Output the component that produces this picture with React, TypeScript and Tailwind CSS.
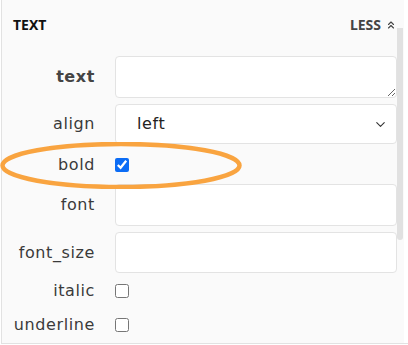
import { ChevronsUp, ChevronDown } from "lucide-react";

function Label({ children, bold }: { children: string; bold?: boolean }) {
  return (
    <div
      className={`w-[93px] shrink-0 text-right font-['DejaVu_Sans',sans-serif] text-[16px] tracking-[0.6px] ${
        bold ? "font-bold text-[#444]" : "text-[#3a3a3a]"
      }`}
    >
      {children}
    </div>
  );
}

export default function App() {
  return (
    <main className="relative h-[345px] w-[408px] overflow-hidden bg-white font-['Noto_Sans',sans-serif]">
      <div className="ml-px flex h-[344px] border-b border-l border-[#e2e2e2] bg-[#fafafa]">
        <div className="flex flex-1 flex-col">
          {/* header */}
          <div className="flex h-[49px] items-center justify-between pl-[11px] pr-[0px]">
            <span className="text-[14px] font-bold text-[#111]">TEXT</span>
            <span className="flex items-center gap-[4px] text-[14px] font-bold text-[#444]">
              LESS
              <ChevronsUp size={12} strokeWidth={2.25} />
            </span>
          </div>

          <div className="flex flex-col">
            {/* text */}
            <div className="mt-[7px] flex h-[42px] items-center gap-5">
              <Label bold>text</Label>
              <textarea className="block h-[42px] flex-1 resize-y rounded border border-[#e3e3e3] bg-white outline-none" />
            </div>

            {/* align */}
            <div className="mt-[6px] flex h-[40px] items-center gap-5">
              <Label>align</Label>
              <div className="flex h-[40px] flex-1 items-center justify-between rounded border border-[#e3e3e3] bg-white pl-[21px] pr-[8px] font-['DejaVu_Sans',sans-serif] text-[16px] tracking-[0.6px] text-[#222]">
                left
                <ChevronDown size={15} strokeWidth={1.75} className="text-[#333]" />
              </div>
            </div>

            {/* bold */}
            <div className="flex h-[40px] items-center gap-5 pt-[2px]">
              <Label>bold</Label>
              <input
                type="checkbox"
                defaultChecked
                className="m-0 h-[14px] w-[14px] accent-[#0b6cf5]"
              />
            </div>

            {/* font */}
            <div className="flex h-[42px] items-center gap-5">
              <Label>font</Label>
              <input className="h-[42px] flex-1 rounded border border-[#e3e3e3] bg-white outline-none" />
            </div>

            {/* font_size */}
            <div className="mt-[6px] flex h-[41px] items-center gap-5">
              <Label>font_size</Label>
              <input className="h-[41px] flex-1 rounded border border-[#e3e3e3] bg-white outline-none" />
            </div>

            {/* italic */}
            <div className="flex h-[36px] items-center gap-5">
              <Label>italic</Label>
              <input type="checkbox" className="m-0 h-[14px] w-[14px]" />
            </div>

            {/* underline */}
            <div className="flex h-[31px] items-center gap-5">
              <Label>underline</Label>
              <input type="checkbox" className="m-0 h-[14px] w-[14px]" />
            </div>
          </div>
        </div>

        {/* scrollbar */}
        <div className="w-[7px] shrink-0 bg-[#fafafa]">
          <div className="mt-[28px] h-[212px] w-[6px] rounded-b-sm bg-[#e1e1e1]" />
        </div>
        <div className="w-[4px] shrink-0 bg-white" />
      </div>

      {/* highlight ellipse */}
      <svg
        className="pointer-events-none absolute left-0 top-[142px]"
        width="242"
        height="47"
        viewBox="0 0 242 47"
      >
        <ellipse
          cx="121"
          cy="23.5"
          rx="118.5"
          ry="21.5"
          fill="none"
          stroke="#f9a440"
          strokeWidth="4.5"
        />
      </svg>
    </main>
  );
}
